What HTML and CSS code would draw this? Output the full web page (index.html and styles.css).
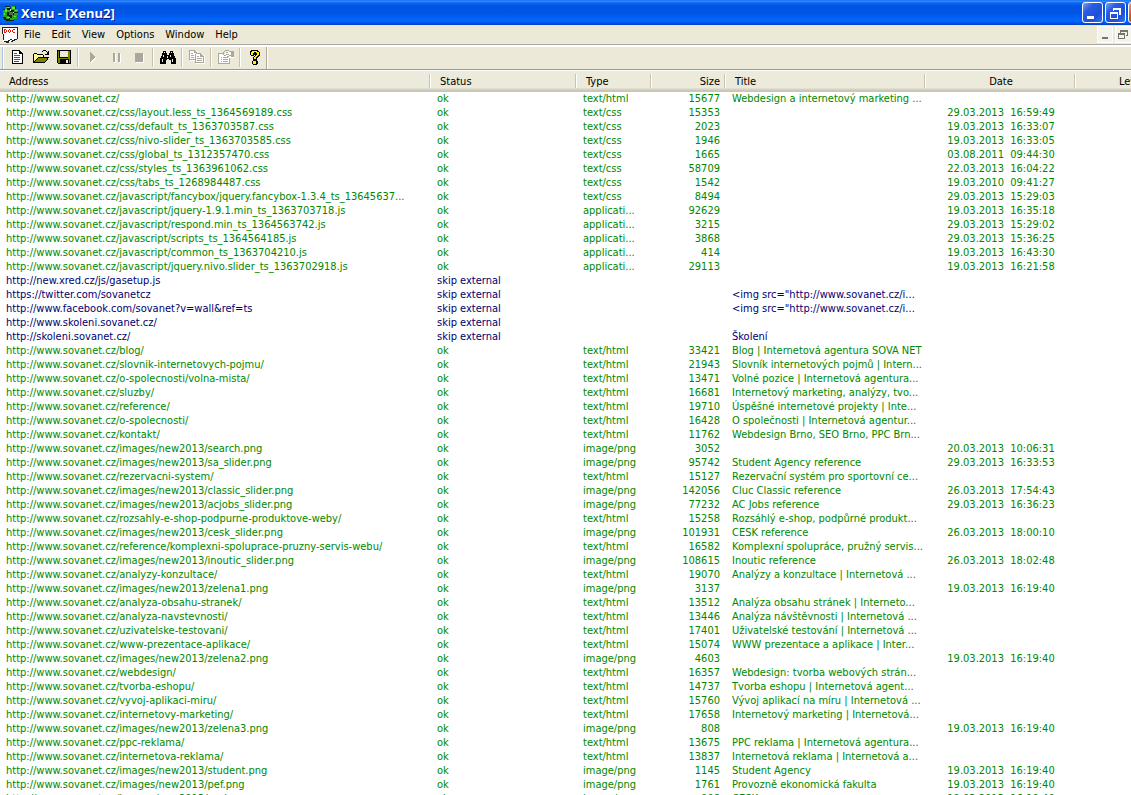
FILE: index.html
```html
<!DOCTYPE html>
<html lang="en">
<head>
<meta charset="utf-8">
<title>Xenu - [Xenu2]</title>
<link rel="stylesheet" href="styles.css">
</head>
<body>
<header class="titlebar">
  <svg class="icon" viewBox="0 0 16 16" shape-rendering="crispEdges" aria-hidden="true">
    <path fill="#0b2608" d="M3 1h5v1h3V1h3v3h2v6h-1v4h-3v2H4v-1H2v-2H1V4h2z"/>
    <path fill="#28a51d" d="M3 2h5v1H5v2h3v2H5v4h2v3H4v-2H1V5h2zM9 1h4v3h3v3h-4V5H9zM12 8h4v2h-1v4h-3v1H8v-2h2v-3h2z"/>
    <path fill="#62e23c" d="M3 4h2v3H3zM5 2h3v1H5zM10 2h3v2h-3zM13 5h2v1h-2zM5 12h3v1H5zM2 8h1v2H2zM12 11h2v1h-2z"/>
    <path fill="#59645a" d="M7 7h4v3H7z"/><path fill="#d1e5cb" d="M8 4h1v2H8zM11 7h1v1h-1z"/>
  </svg>
  <h1 class="caption">Xenu - [Xenu2]</h1>
  <div class="window-buttons">
    <button class="win" aria-label="Minimize"><svg viewBox="0 0 19 18" shape-rendering="crispEdges"><path fill="#fff" d="M4 12h7v3H4z"/></svg></button>
    <button class="win" aria-label="Restore"><svg viewBox="0 0 19 18" shape-rendering="crispEdges"><path fill="#fff" fill-rule="evenodd" d="M7 4h8v7h-2V6H8v1H7zM4 8h8v7H4zm1 2v4h6v-4z"/></svg></button>
    <button class="win close" aria-label="Close"></button>
  </div>
</header>
<nav class="menubar">
  <svg class="icon doc" viewBox="0 0 16 16" shape-rendering="crispEdges" aria-hidden="true">
    <path fill="#fff" d="M0 0h16v11h-1v2h-4v2H1V5H0z"/>
    <path fill="#222" d="M0 0h16v1H0zM0 1h1v6H0zM15 1h1v11h-1zM1 7h1v6H1zM2 14h5v1H2zM6 13h2v1H6zM8 12h2v1H8zM10 13h3v1h-3zM12 12h3v1h-3zM9 14h2v1H9zM4 15h3v1H4z"/>
    <path fill="#e8140c" fill-rule="evenodd" d="M2 2h2v1h1v2H4v1H2zm1 1v2h1V3zM6 3h1v2H6zM7 2h1v1H7zM7 5h1v1H7zM8 3h1v2H8zM10 3h1v2h-1zM11 2h2v1h-2zM11 5h2v1h-2z"/>
  </svg>
  <button class="menu">File</button><button class="menu">Edit</button><button class="menu">View</button><button class="menu">Options</button><button class="menu">Window</button><button class="menu">Help</button>
  <div class="child-buttons">
    <button class="mdi" aria-label="Minimize child"><svg viewBox="0 0 16 16" shape-rendering="crispEdges"><path fill="#777569" d="M5 10h6v2H5z"/></svg></button>
    <button class="mdi" aria-label="Restore child"><svg viewBox="0 0 16 16" shape-rendering="crispEdges"><path fill="#777569" fill-rule="evenodd" d="M5 3h8v6h-2V8h1V5H6v1H5zM3 6h7v6H3zm1 2v3h5V8z"/></svg></button>
  </div>
</nav>
<div class="toolbar" role="toolbar" aria-label="Main">
  <button class="tool" aria-label="New"><svg class="icon" viewBox="0 0 16 16" shape-rendering="crispEdges"><path fill="#fff" d="M2 1h8l3 3v11H2z"/><path fill-rule="evenodd" d="M2 1h8v1h1v1h1v1h1v11H2zm1 1v12h9V5H9V2z"/><path fill="#555" d="M4 4h3v1H4zM4 6h6v1H4zM4 8h6v1H4zM4 10h6v1H4zM4 12h5v1H4z"/></svg></button>
  <button class="tool" aria-label="Open"><svg class="icon" viewBox="0 0 16 16" shape-rendering="crispEdges"><path fill="#fff79a" d="M1 5h3v1h6v2H5v1H4v1H3v2H2v1H1z"/><path fill="#808000" d="M5 9h10v1h-1v1h-1v1h-1v1H2v-1h1v-1h1v-1h1z"/><path d="M1 4h3v1H1zM4 5h6v1H4zM10 6h1v2h-1zM0 5h1v8H0zM5 8h10v1H5zM15 8h1v1h-1zM4 9h1v1H4zM3 10h1v1H3zM2 11h1v1H2zM1 12h1v1H1zM0 13h12v1H0zM12 12h1v1h-1zM13 11h1v1h-1zM14 9h1v2h-1zM9 2h1v1H9zM10 1h3v1h-3zM13 2h1v1h-1zM15 2h1v4h-4V5h2V3h1z"/></svg></button>
  <button class="tool" aria-label="Save"><svg class="icon" viewBox="0 0 16 16" shape-rendering="crispEdges"><path d="M1 1h14v14H2v-1H1z"/><path fill="#808000" d="M2 2h1v7h9V2h2v12H2z"/><path fill="#ece9d8" d="M4 2h8v6H4z"/><path d="M4 10h9v4H4z"/><path fill="#ece9d8" d="M10 11h2v3h-2z"/></svg></button>
  <span class="sep"></span>
  <button class="tool" disabled aria-label="Start"><svg class="icon" viewBox="0 0 16 16" shape-rendering="crispEdges"><path fill="#fff" d="M6 5h1v1h1v1h1v1h1v1h1v1h-1v1H9v1H8v1H7v1H6z"/><path fill="#aca899" d="M5 3h1v1h1v1h1v1h1v1h1v2H9v1H8v1H7v1H6v1H5z"/></svg></button>
  <button class="tool" disabled aria-label="Pause"><svg class="icon" viewBox="0 0 16 16" shape-rendering="crispEdges"><path fill="#fff" d="M6 5h2v9H6zM11 5h2v9h-2z"/><path fill="#aca899" d="M5 4h2v9H5zM10 4h2v9h-2z"/></svg></button>
  <button class="tool" disabled aria-label="Stop"><svg class="icon" viewBox="0 0 16 16" shape-rendering="crispEdges"><path fill="#fff" d="M5 5h8v9H5z"/><path fill="#aca899" d="M4 4h8v9H4z"/></svg></button>
  <span class="sep"></span>
  <button class="tool" aria-label="Find"><svg class="icon" viewBox="0 0 16 16" shape-rendering="crispEdges"><path d="M3 2h3v2h1v2h2V4h1V2h3v2h1v3h1v2h1v6h-5v-4H9v-1H7v1H6v4H0V9h1V7h1V4h1z"/><path fill="#ece9d8" d="M4 3h1v1H4zM11 3h1v1h-1zM3 6h1v2H3zM2 10h1v3H2zM10 6h1v2h-1zM12 10h1v3h-1zM7 7h1v2H7z"/></svg></button>
  <span class="sep"></span>
  <button class="tool" disabled aria-label="Copy"><svg class="icon" viewBox="0 0 16 16" shape-rendering="crispEdges"><path fill="#fff" d="M1 2h6l3 3h3l3 3v7H7v-3H1z"/><path fill="#aca899" fill-rule="evenodd" d="M0 1h6v1h1v1h1v1h4v1h1v1h1v1h1v7H6v-3H0zm1 1v8h5V5h1V4H5V2zm6 3v8h7V8h-3V5zM2 4h2v1H2zM2 6h3v1H2zM2 8h3v1H2zM8 7h2v1H8zM8 9h5v1H8zM8 11h5v1H8z"/></svg></button>
  <span class="sep"></span>
  <button class="tool" disabled aria-label="Properties"><svg class="icon" viewBox="0 0 16 16" shape-rendering="crispEdges"><path fill="#fff" d="M1 5h5l3-3h7v7h-4v6H1z"/><path fill="#aca899" fill-rule="evenodd" d="M0 4h5v1H1v9h10V9h1v6H0zM7 1h4v1H7zM6 2h1v1H6zM5 3h1v3H5zM11 2h2v1h-2zM13 2h3v6h-3V7h-2V6h2zM6 6h2v1H6zM8 5h3v1H8zM8 3h2v1H8zM9 7h2v1H9zM3 8h1v1H3zM5 8h5v1H5zM3 10h1v1H3zM5 10h5v1H5zM3 12h1v1H3zM5 12h5v1H5z"/></svg></button>
  <span class="sep"></span>
  <button class="tool" aria-label="About"><svg class="icon" viewBox="0 0 16 16" shape-rendering="crispEdges"><path d="M4 1h7v1h1v1h1v4h-1v1h-1v1h-1v2H6V8h1V7h1V6H7v1H4V6H3V2h1zM6 11h4v1h1v3h-1v1H6v-1H5v-3h1z"/><path fill="#ffef00" d="M5 2h5v1h2v3h-1v1h-1v1H9v2H7V8h1V7h1V6h1V4H9V3H7v1H6v2H4V3h1zM6 12h3v3H6z"/></svg></button>
  <span class="edge"></span>
</div>
<main class="list">
<table class="links">
<colgroup><col class="c-address"><col class="c-status"><col class="c-type"><col class="c-size"><col class="c-title"><col class="c-date"><col class="c-level"></colgroup>
<thead><tr><th>Address</th><th>Status</th><th>Type</th><th>Size</th><th>Title</th><th>Date</th><th>Level</th></tr></thead>
<tbody>
<tr><td>http://www.sovanet.cz/</td><td>ok</td><td>text/html</td><td>15677</td><td>Webdesign a internetový marketing ...</td><td></td><td></td></tr>
<tr><td>http://www.sovanet.cz/css/layout.less_ts_1364569189.css</td><td>ok</td><td>text/css</td><td>15353</td><td></td><td>29.03.2013  16:59:49</td><td></td></tr>
<tr><td>http://www.sovanet.cz/css/default_ts_1363703587.css</td><td>ok</td><td>text/css</td><td>2023</td><td></td><td>19.03.2013  16:33:07</td><td></td></tr>
<tr><td>http://www.sovanet.cz/css/nivo-slider_ts_1363703585.css</td><td>ok</td><td>text/css</td><td>1946</td><td></td><td>19.03.2013  16:33:05</td><td></td></tr>
<tr><td>http://www.sovanet.cz/css/global_ts_1312357470.css</td><td>ok</td><td>text/css</td><td>1665</td><td></td><td>03.08.2011  09:44:30</td><td></td></tr>
<tr><td>http://www.sovanet.cz/css/styles_ts_1363961062.css</td><td>ok</td><td>text/css</td><td>58709</td><td></td><td>22.03.2013  16:04:22</td><td></td></tr>
<tr><td>http://www.sovanet.cz/css/tabs_ts_1268984487.css</td><td>ok</td><td>text/css</td><td>1542</td><td></td><td>19.03.2010  09:41:27</td><td></td></tr>
<tr><td>http://www.sovanet.cz/javascript/fancybox/jquery.fancybox-1.3.4_ts_13645637...</td><td>ok</td><td>text/css</td><td>8494</td><td></td><td>29.03.2013  15:29:03</td><td></td></tr>
<tr><td>http://www.sovanet.cz/javascript/jquery-1.9.1.min_ts_1363703718.js</td><td>ok</td><td>applicati...</td><td>92629</td><td></td><td>19.03.2013  16:35:18</td><td></td></tr>
<tr><td>http://www.sovanet.cz/javascript/respond.min_ts_1364563742.js</td><td>ok</td><td>applicati...</td><td>3215</td><td></td><td>29.03.2013  15:29:02</td><td></td></tr>
<tr><td>http://www.sovanet.cz/javascript/scripts_ts_1364564185.js</td><td>ok</td><td>applicati...</td><td>3868</td><td></td><td>29.03.2013  15:36:25</td><td></td></tr>
<tr><td>http://www.sovanet.cz/javascript/common_ts_1363704210.js</td><td>ok</td><td>applicati...</td><td>414</td><td></td><td>19.03.2013  16:43:30</td><td></td></tr>
<tr><td>http://www.sovanet.cz/javascript/jquery.nivo.slider_ts_1363702918.js</td><td>ok</td><td>applicati...</td><td>29113</td><td></td><td>19.03.2013  16:21:58</td><td></td></tr>
<tr class="external"><td>http://new.xred.cz/js/gasetup.js</td><td>skip external</td><td></td><td></td><td></td><td></td><td></td></tr>
<tr class="external"><td>https://twitter.com/sovanetcz</td><td>skip external</td><td></td><td></td><td>&lt;img src="http://www.sovanet.cz/i...</td><td></td><td></td></tr>
<tr class="external"><td>http://www.facebook.com/sovanet?v=wall&amp;ref=ts</td><td>skip external</td><td></td><td></td><td>&lt;img src="http://www.sovanet.cz/i...</td><td></td><td></td></tr>
<tr class="external"><td>http://www.skoleni.sovanet.cz/</td><td>skip external</td><td></td><td></td><td></td><td></td><td></td></tr>
<tr class="external"><td>http://skoleni.sovanet.cz/</td><td>skip external</td><td></td><td></td><td>Školení</td><td></td><td></td></tr>
<tr><td>http://www.sovanet.cz/blog/</td><td>ok</td><td>text/html</td><td>33421</td><td>Blog | Internetová agentura SOVA NET</td><td></td><td></td></tr>
<tr><td>http://www.sovanet.cz/slovnik-internetovych-pojmu/</td><td>ok</td><td>text/html</td><td>21943</td><td>Slovník internetových pojmů | Intern...</td><td></td><td></td></tr>
<tr><td>http://www.sovanet.cz/o-spolecnosti/volna-mista/</td><td>ok</td><td>text/html</td><td>13471</td><td>Volné pozice | Internetová agentura...</td><td></td><td></td></tr>
<tr><td>http://www.sovanet.cz/sluzby/</td><td>ok</td><td>text/html</td><td>16681</td><td>Internetový marketing, analýzy, tvo...</td><td></td><td></td></tr>
<tr><td>http://www.sovanet.cz/reference/</td><td>ok</td><td>text/html</td><td>19710</td><td>Úspěšné internetové projekty | Inte...</td><td></td><td></td></tr>
<tr><td>http://www.sovanet.cz/o-spolecnosti/</td><td>ok</td><td>text/html</td><td>16428</td><td>O společnosti | Internetová agentur...</td><td></td><td></td></tr>
<tr><td>http://www.sovanet.cz/kontakt/</td><td>ok</td><td>text/html</td><td>11762</td><td>Webdesign Brno, SEO Brno, PPC Brn...</td><td></td><td></td></tr>
<tr><td>http://www.sovanet.cz/images/new2013/search.png</td><td>ok</td><td>image/png</td><td>3052</td><td></td><td>20.03.2013  10:06:31</td><td></td></tr>
<tr><td>http://www.sovanet.cz/images/new2013/sa_slider.png</td><td>ok</td><td>image/png</td><td>95742</td><td>Student Agency reference</td><td>29.03.2013  16:33:53</td><td></td></tr>
<tr><td>http://www.sovanet.cz/rezervacni-system/</td><td>ok</td><td>text/html</td><td>15127</td><td>Rezervační systém pro sportovní ce...</td><td></td><td></td></tr>
<tr><td>http://www.sovanet.cz/images/new2013/classic_slider.png</td><td>ok</td><td>image/png</td><td>142056</td><td>Cluc Classic reference</td><td>26.03.2013  17:54:43</td><td></td></tr>
<tr><td>http://www.sovanet.cz/images/new2013/acjobs_slider.png</td><td>ok</td><td>image/png</td><td>77232</td><td>AC Jobs reference</td><td>29.03.2013  16:36:23</td><td></td></tr>
<tr><td>http://www.sovanet.cz/rozsahly-e-shop-podpurne-produktove-weby/</td><td>ok</td><td>text/html</td><td>15258</td><td>Rozsáhlý e-shop, podpůrné produkt...</td><td></td><td></td></tr>
<tr><td>http://www.sovanet.cz/images/new2013/cesk_slider.png</td><td>ok</td><td>image/png</td><td>101931</td><td>CESK reference</td><td>26.03.2013  18:00:10</td><td></td></tr>
<tr><td>http://www.sovanet.cz/reference/komplexni-spoluprace-pruzny-servis-webu/</td><td>ok</td><td>text/html</td><td>16582</td><td>Komplexní spolupráce, pružný servis...</td><td></td><td></td></tr>
<tr><td>http://www.sovanet.cz/images/new2013/inoutic_slider.png</td><td>ok</td><td>image/png</td><td>108615</td><td>Inoutic reference</td><td>26.03.2013  18:02:48</td><td></td></tr>
<tr><td>http://www.sovanet.cz/analyzy-konzultace/</td><td>ok</td><td>text/html</td><td>19070</td><td>Analýzy a konzultace | Internetová ...</td><td></td><td></td></tr>
<tr><td>http://www.sovanet.cz/images/new2013/zelena1.png</td><td>ok</td><td>image/png</td><td>3137</td><td></td><td>19.03.2013  16:19:40</td><td></td></tr>
<tr><td>http://www.sovanet.cz/analyza-obsahu-stranek/</td><td>ok</td><td>text/html</td><td>13512</td><td>Analýza obsahu stránek | Interneto...</td><td></td><td></td></tr>
<tr><td>http://www.sovanet.cz/analyza-navstevnosti/</td><td>ok</td><td>text/html</td><td>13446</td><td>Analýza návštěvnosti | Internetová ...</td><td></td><td></td></tr>
<tr><td>http://www.sovanet.cz/uzivatelske-testovani/</td><td>ok</td><td>text/html</td><td>17401</td><td>Uživatelské testování | Internetová ...</td><td></td><td></td></tr>
<tr><td>http://www.sovanet.cz/www-prezentace-aplikace/</td><td>ok</td><td>text/html</td><td>15074</td><td>WWW prezentace a aplikace | Inter...</td><td></td><td></td></tr>
<tr><td>http://www.sovanet.cz/images/new2013/zelena2.png</td><td>ok</td><td>image/png</td><td>4603</td><td></td><td>19.03.2013  16:19:40</td><td></td></tr>
<tr><td>http://www.sovanet.cz/webdesign/</td><td>ok</td><td>text/html</td><td>16357</td><td>Webdesign: tvorba webových strán...</td><td></td><td></td></tr>
<tr><td>http://www.sovanet.cz/tvorba-eshopu/</td><td>ok</td><td>text/html</td><td>14737</td><td>Tvorba eshopu | Internetová agent...</td><td></td><td></td></tr>
<tr><td>http://www.sovanet.cz/vyvoj-aplikaci-miru/</td><td>ok</td><td>text/html</td><td>15760</td><td>Vývoj aplikací na míru | Internetová ...</td><td></td><td></td></tr>
<tr><td>http://www.sovanet.cz/internetovy-marketing/</td><td>ok</td><td>text/html</td><td>17658</td><td>Internetový marketing | Internetová...</td><td></td><td></td></tr>
<tr><td>http://www.sovanet.cz/images/new2013/zelena3.png</td><td>ok</td><td>image/png</td><td>808</td><td></td><td>19.03.2013  16:19:40</td><td></td></tr>
<tr><td>http://www.sovanet.cz/ppc-reklama/</td><td>ok</td><td>text/html</td><td>13675</td><td>PPC reklama | Internetová agentura...</td><td></td><td></td></tr>
<tr><td>http://www.sovanet.cz/internetova-reklama/</td><td>ok</td><td>text/html</td><td>13837</td><td>Internetová reklama | Internetová a...</td><td></td><td></td></tr>
<tr><td>http://www.sovanet.cz/images/new2013/student.png</td><td>ok</td><td>image/png</td><td>1145</td><td>Student Agency</td><td>19.03.2013  16:19:40</td><td></td></tr>
<tr><td>http://www.sovanet.cz/images/new2013/pef.png</td><td>ok</td><td>image/png</td><td>1761</td><td>Provozně ekonomická fakulta</td><td>19.03.2013  16:19:40</td><td></td></tr>
<tr><td>http://www.sovanet.cz/images/new2013/cesk.png</td><td>ok</td><td>image/png</td><td>998</td><td>CESK</td><td>19.03.2013  16:19:40</td><td></td></tr>
</tbody>
</table>
</main>
</body>
</html>
```
FILE: styles.css
```css
* { box-sizing: border-box; }
body {
  margin: 0;
  height: 100vh;
  display: flex;
  flex-direction: column;
  overflow: hidden;
  background: #fff;
  color: #000;
  font-family: "DejaVu Sans Condensed", "Noto Sans", sans-serif;
  font-size: 11px;
  line-height: 14px;
}
button {
  margin: 0;
  padding: 0;
  border: 0;
  background: none;
  color: inherit;
  font: inherit;
}
.icon { display: block; flex: none; width: 16px; height: 16px; }

.titlebar {
  flex: none;
  display: flex;
  align-items: center;
  gap: 3px;
  height: 25px;
  padding-left: 2px;
  overflow: hidden;
  background: linear-gradient(#0a5fe8 0, #3a93ff 1px, #0a66f2 3px, #0054e3 6px, #0056e6 14px, #0066ff 20px, #0062f6 22px, #003fc8 25px);
}
.caption {
  margin: 0;
  color: #fff;
  font-size: 13px;
  line-height: 18px;
  font-family: "Noto Sans", sans-serif;
  font-weight: 700;
  text-shadow: 1px 1px 0 #0a1883;
}
.window-buttons { display: flex; gap: 2px; margin: 0 -18px 0 auto; }
.win {
  width: 21px;
  height: 21px;
  border: 1px solid #fff;
  border-radius: 3px;
  background: linear-gradient(135deg, #7f9ff2 0, #2a5de0 30%, #1d4fd8 70%, #2d74f5 100%);
}
.win svg { display: block; width: 19px; height: 18px; }
.win.close { background: linear-gradient(135deg, #f0a088 0, #da4a20 40%, #c83a10 100%); }

.menubar {
  flex: none;
  display: flex;
  align-items: center;
  height: 19px;
  padding-left: 2px;
  background: #ece9d8;
}
.menu { padding: 0 5px 0 6px; }
.child-buttons { display: flex; gap: 2px; margin-left: auto; }
.mdi {
  width: 16px;
  height: 17px;
  border: 1px solid #fff;
  background: #f5f4ec;
}
.mdi:last-child { border-right: 0; }
.mdi svg { display: block; width: 16px; height: 16px; margin: -1px; }

.toolbar {
  flex: none;
  display: flex;
  height: 26px;
  padding-left: 2px;
  border-top: 1px solid #aca899;
  border-bottom: 1px solid #7f9db9;
  background: linear-gradient(#fff 2px, #ece9d8 2px);
}
.toolbar::before {
  content: "";
  width: 3px;
  margin-top: 2px;
  border-left: 1px solid #aac4e8;
  box-shadow: inset 1px 0 #fff;
}
.tool {
  display: flex;
  align-items: center;
  justify-content: center;
  width: 23px;
}
.sep {
  width: 6px;
  margin: 3px 0 2px;
  background: linear-gradient(90deg, transparent 2px, #c5c2b0 2px 3px, #fff 3px 4px, transparent 4px);
}
.edge { width: 2px; margin-top: 2px; border-left: 1px solid #aca899; background: #fff; }

.list { flex: 1; min-height: 0; overflow: hidden; }
.links { width: 1151px; table-layout: fixed; border-collapse: collapse; }
.c-address { width: 431px; }
.c-status { width: 146px; }
.c-type, .c-level { width: 75px; }
.c-size { width: 74px; }
.c-title { width: 200px; }
.c-date { width: 150px; }
.links th {
  height: 22px;
  padding: 2px 6px 0 9px;
  font-weight: 400;
  text-align: left;
  background:
    linear-gradient(90deg, #c7c5b2 1px, #fff 1px) right 4px / 2px 14px no-repeat,
    linear-gradient(#fff 1px, #ebeadb 1px 18px, #e2decd 18px 19px, #d6d2c2 19px 20px, #cbc7b8 20px);
  background-origin: border-box;
}
.links td {
  height: 14px;
  padding: 0 6px;
  color: #008800;
  line-height: 14px;
  white-space: pre;
}
.links .external td { color: #000070; }
.links th:nth-child(4), .links td:nth-child(4), .links th:nth-child(7) { text-align: right; }
.links th:nth-child(6), .links td:nth-child(6) { padding-left: 0; padding-right: 0; text-align: center; }
```
